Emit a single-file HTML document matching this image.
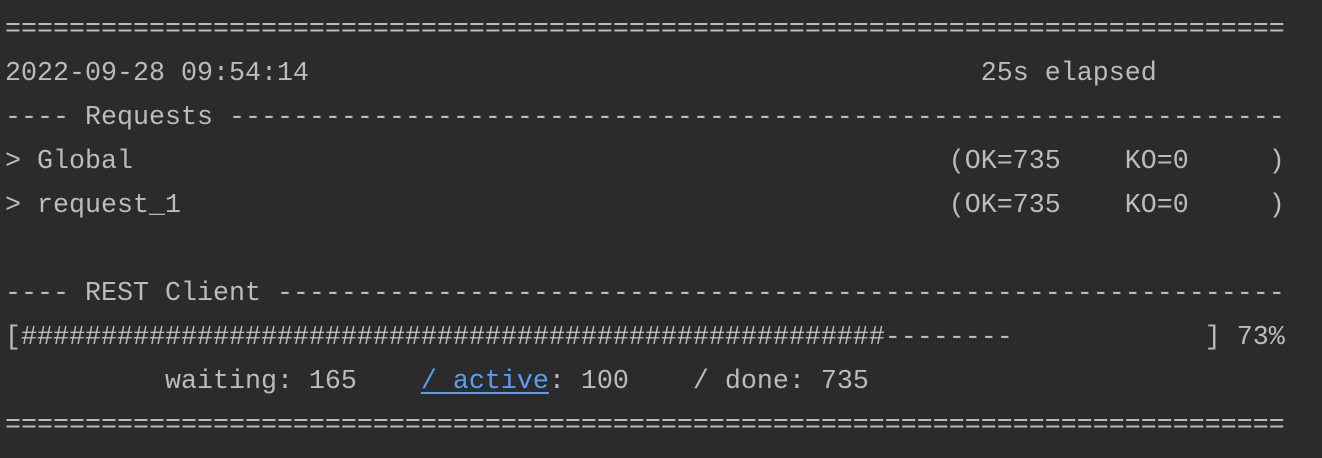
<!DOCTYPE html>
<html><head><meta charset="utf-8"><style>
html,body{margin:0;padding:0;background:#2b2b2b;width:1322px;height:458px;overflow:hidden}
pre{margin:0;padding:8px 0 0 5px;font-family:"Liberation Mono",monospace;font-size:26.67px;line-height:44px;color:#bbbbbb}
a{color:#589df6;text-decoration:underline;text-underline-offset:4px}
</style></head><body><pre>================================================================================
2022-09-28 09:54:14                                          25s elapsed
---- Requests ------------------------------------------------------------------
&gt; Global                                                   (OK=735    KO=0     )
&gt; request_1                                                (OK=735    KO=0     )

---- REST Client ---------------------------------------------------------------
[######################################################--------            ] 73%
          waiting: 165    <a>/ active</a>: 100    / done: 735
================================================================================</pre></body></html>
